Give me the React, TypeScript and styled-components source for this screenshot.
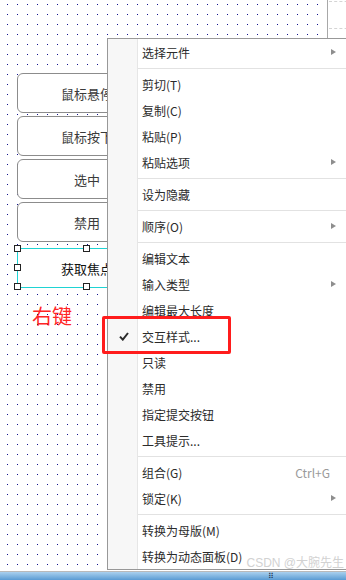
import React from 'react';
import styled, { createGlobalStyle } from 'styled-components';

const GlobalStyle = createGlobalStyle`
  html, body {
    margin: 0;
    padding: 0;
    background: #ffffff;
    overflow: hidden;
  }
  body {
    font-family: 'Noto Sans CJK SC', 'Noto Sans', sans-serif;
  }
`;

const dotGrid = `url("data:image/svg+xml,%3Csvg xmlns='http://www.w3.org/2000/svg' width='10' height='10'%3E%3Crect x='7' y='4' width='1' height='1' fill='%2310108a'/%3E%3C/svg%3E")`;

const Page = styled.div`
  width: 346px;
  height: 580px;
  display: flex;
  flex-direction: column;
  position: relative;
  overflow: hidden;
  background: #ffffff;
`;

const Workspace = styled.div`
  flex: 1;
  display: flex;
  flex-direction: row;
  position: relative;
`;

const Canvas = styled.div`
  width: 322px;
  padding: 73px 0 0 17px;
  box-sizing: border-box;
  display: flex;
  flex-direction: column;
  gap: 3px;
  background-image: ${dotGrid};
  background-repeat: repeat;
`;

const ActionButton = styled.div`
  width: 140px;
  height: 40px;
  box-sizing: border-box;
  border: 1px solid #8c8c8c;
  border-radius: 6px;
  background: #ffffff;
  display: flex;
  align-items: center;
  justify-content: center;
  font-size: 13px;
  color: #3a3a3a;
`;

const SelectedButton = styled.div`
  position: relative;
  margin-top: 3px;
  width: 140px;
  height: 40px;
  box-sizing: border-box;
  border: 1px solid #1fd3d3;
  background: #ffffff;
  display: flex;
  align-items: center;
  justify-content: center;
  font-size: 13px;
  color: #111111;
`;

const Handle = styled.span<{ $x: string; $y: string }>`
  position: absolute;
  left: ${(p) => p.$x};
  top: ${(p) => p.$y};
  width: 7px;
  height: 7px;
  margin: -4px 0 0 -4px;
  box-sizing: border-box;
  border: 1px solid #222222;
  background: #ffffff;
`;

const Annotation = styled.div`
  margin: 12px 0 0 15px;
  font-size: 20px;
  line-height: 26px;
  color: #ff2424;
`;

const RulerStub = styled.div`
  position: absolute;
  left: 327px;
  top: 0;
  width: 30px;
  height: 38px;
  border-left: 1px solid #a8a8a8;

  &::before {
    content: '';
    position: absolute;
    left: 1px;
    right: 0;
    top: 1px;
    height: 26px;
    border-top: 1px dashed #d4d4d4;
    border-bottom: 1px dashed #d4d4d4;
  }
`;

const Menu = styled.div`
  position: absolute;
  left: 107px;
  top: 38px;
  width: 244px;
  border: 1px solid #989898;
  display: flex;
  flex-direction: column;
  background: linear-gradient(
    to right,
    #f7f7f7 0,
    #f7f7f7 29px,
    #e6e6e6 29px,
    #e6e6e6 30px,
    #ffffff 30px
  );
  font-size: 12px;
  color: #2b2b2b;
`;

const Item = styled.div`
  height: 26px;
  display: grid;
  grid-template-columns: 30px 1fr auto;
  align-items: center;
`;

const Gutter = styled.span`
  display: flex;
  justify-content: center;
  align-items: center;
  padding-left: 1px;
`;

const Label = styled.span`
  padding-left: 4px;
  white-space: nowrap;
`;

const Shortcut = styled.span`
  padding-right: 22px;
  color: #9a9a9a;
  font-size: 12px;
`;

const Arrow = styled.span`
  width: 0;
  height: 0;
  margin-right: 16px;
  border-top: 3.5px solid transparent;
  border-bottom: 3.5px solid transparent;
  border-left: 5px solid #8e8e8e;
`;

const Separator = styled.div`
  height: 6px;
  display: flex;
  align-items: center;
  padding-left: 30px;

  &::after {
    content: '';
    flex: 1;
    height: 1px;
    background: #e2e2e2;
  }
`;

const Highlight = styled.div`
  position: absolute;
  left: 102px;
  top: 316px;
  width: 129px;
  height: 38px;
  box-sizing: border-box;
  border: 3px solid #ff1c1c;
  border-radius: 2px;
`;

const Watermark = styled.div`
  position: absolute;
  right: 2px;
  bottom: 1px;
  font-size: 12px;
  line-height: 14px;
  color: #d2d2d2;
  font-family: 'Liberation Sans', 'Noto Sans CJK SC', sans-serif;
`;

const Taskbar = styled.div`
  height: 8px;
  border-top: 1px solid #b9b9b9;
  background: linear-gradient(to bottom, #a9d0ee, #5a9bd3);
  display: flex;
  justify-content: flex-end;
  padding-right: 72px;
  font-size: 8px;
  line-height: 8px;
  color: #1b3550;
`;

type MenuEntry =
  | { kind: 'sep' }
  | { kind: 'item'; label: string; sub?: boolean; shortcut?: string; checked?: boolean };

const entries: MenuEntry[] = [
  { kind: 'item', label: '选择元件', sub: true },
  { kind: 'sep' },
  { kind: 'item', label: '剪切(T)' },
  { kind: 'item', label: '复制(C)' },
  { kind: 'item', label: '粘贴(P)' },
  { kind: 'item', label: '粘贴选项', sub: true },
  { kind: 'sep' },
  { kind: 'item', label: '设为隐藏' },
  { kind: 'sep' },
  { kind: 'item', label: '顺序(O)', sub: true },
  { kind: 'sep' },
  { kind: 'item', label: '编辑文本' },
  { kind: 'item', label: '输入类型', sub: true },
  { kind: 'item', label: '编辑最大长度' },
  { kind: 'item', label: '交互样式...', checked: true },
  { kind: 'item', label: '只读' },
  { kind: 'item', label: '禁用' },
  { kind: 'item', label: '指定提交按钮' },
  { kind: 'item', label: '工具提示...' },
  { kind: 'sep' },
  { kind: 'item', label: '组合(G)', shortcut: 'Ctrl+G' },
  { kind: 'item', label: '锁定(K)', sub: true },
  { kind: 'sep' },
  { kind: 'item', label: '转换为母版(M)' },
  { kind: 'item', label: '转换为动态面板(D)' },
];

const CheckIcon = () => (
  <svg width="10" height="9" viewBox="0 0 10 9">
    <path d="M1 4.6 L3.8 7.6 L9 1" fill="none" stroke="#2a2a2a" strokeWidth="2" />
  </svg>
);

const App: React.FC = () => {
  const buttons = ['鼠标悬停', '鼠标按下', '选中', '禁用'];

  return (
    <Page>
      <GlobalStyle />
      <Workspace>
        <Canvas>
          {buttons.map((label) => (
            <ActionButton key={label}>{label}</ActionButton>
          ))}
          <SelectedButton>
            获取焦点
            <Handle $x="0%" $y="0%" />
            <Handle $x="50%" $y="0%" />
            <Handle $x="100%" $y="0%" />
            <Handle $x="0%" $y="50%" />
            <Handle $x="0%" $y="100%" />
            <Handle $x="50%" $y="100%" />
            <Handle $x="100%" $y="100%" />
          </SelectedButton>
          <Annotation>右键</Annotation>
        </Canvas>
        <RulerStub />
        <Menu>
          {entries.map((entry, i) =>
            entry.kind === 'sep' ? (
              <Separator key={i} />
            ) : (
              <Item key={i}>
                <Gutter>{entry.checked && <CheckIcon />}</Gutter>
                <Label>{entry.label}</Label>
                {entry.shortcut ? (
                  <Shortcut>{entry.shortcut}</Shortcut>
                ) : entry.sub ? (
                  <Arrow />
                ) : (
                  <span />
                )}
              </Item>
            )
          )}
        </Menu>
        <Highlight />
        <Watermark>CSDN @大腕先生</Watermark>
      </Workspace>
      <Taskbar>⠿</Taskbar>
    </Page>
  );
};

export default App;
